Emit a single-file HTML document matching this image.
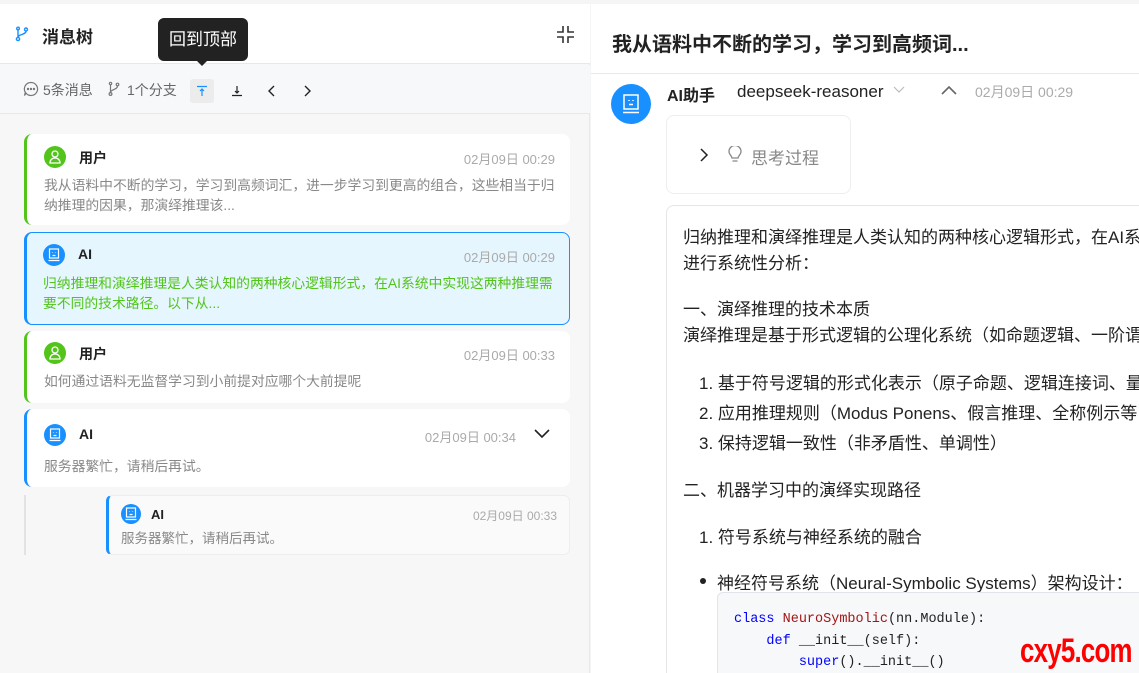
<!DOCTYPE html>
<html><head><meta charset="utf-8"><style>
*{box-sizing:border-box;margin:0;padding:0}
html,body{width:1139px;height:673px;overflow:hidden}
body{background:#f5f5f5;font-family:"Liberation Sans","Noto Sans CJK SC",sans-serif;color:#222;position:relative}
.abs{position:absolute}
.left{left:0;top:4px;width:590px;height:669px;background:#f7f7f7;border-right:1px solid #e8e8e8}
.lh{left:0;top:0;width:590px;height:60px;background:#fff;border-bottom:1px solid #e8e8e8}
.tb{left:0;top:61px;width:590px;height:49px;background:#f7f8fa;border-bottom:1px solid #e8e8e8;font-size:14px;color:#666}
.card{position:absolute;left:24px;width:546px;background:#fff;border-radius:8px;border-left:3px solid #52c41a}
.av{position:absolute;width:22px;height:22px;border-radius:50%}
.av svg{position:absolute;left:5px;top:4px}
.g{background:#52c41a}.b{background:#1890ff}
.nm{position:absolute;font-size:14px;font-weight:bold;color:#222}
.dt{position:absolute;font-size:13px;color:#aaa}
.ct{position:absolute;font-size:13.8px;color:#888;line-height:20px}
.right{left:591px;top:4px;width:548px;height:669px;background:#fff}
.txt{position:absolute;left:683px;font-size:17px;color:#222;white-space:nowrap}
</style></head><body>
<div class="abs left">
 <div class="abs lh">
  <svg class="abs" style="left:15px;top:22px" width="14" height="16" viewBox="0 0 14 16" fill="none" stroke="#1890ff" stroke-width="1.4"><circle cx="3" cy="13" r="1.6"/><circle cx="3" cy="2.5" r="1.3"/><circle cx="11" cy="3.5" r="1.5"/><path d="M3 4v7.4M11 5c0 4-8 3-8 6.5"/></svg>
  <div class="abs" style="left:42px;top:19px;font-size:17px;font-weight:bold">消息树</div>
  <svg class="abs" style="left:557px;top:22px" width="17" height="17" viewBox="0 0 17 17" fill="none" stroke="#333" stroke-width="1.6"><path d="M6 0v6H0M11 0v6h6M6 17v-6H0M11 17v-6h6"/></svg>
 </div>
 <div class="abs tb">
  <svg class="abs" style="left:23px;top:16px" width="16" height="16" viewBox="0 0 16 16" fill="none" stroke="#777" stroke-width="1.2"><path d="M8 1.5a6.5 6.5 0 1 1-5 10.6L1.5 14.5l.8-3.2A6.5 6.5 0 0 1 8 1.5z"/><circle cx="5" cy="8" r=".6" fill="#777"/><circle cx="8" cy="8" r=".6" fill="#777"/><circle cx="11" cy="8" r=".6" fill="#777"/></svg>
  <div class="abs" style="left:43px;top:15px">5条消息</div>
  <svg class="abs" style="left:108px;top:16px" width="12" height="16" viewBox="0 0 12 16" fill="none" stroke="#777" stroke-width="1.2"><circle cx="2.5" cy="13" r="1.4"/><circle cx="2.5" cy="2.5" r="1.2"/><circle cx="9.5" cy="3.5" r="1.3"/><path d="M2.5 4v7.5M9.5 5c0 4-7 3-7 6.5"/></svg>
  <div class="abs" style="left:127px;top:15px">1个分支</div>
  <div class="abs" style="left:190px;top:14px;width:24px;height:24px;background:#ececec;border-radius:3px"></div>
  <svg class="abs" style="left:196px;top:20px" width="12" height="12" viewBox="0 0 12 12" fill="none" stroke="#1890ff" stroke-width="1.2"><path d="M1 1.5h10M6 4v7M4 6l2-2 2 2"/></svg>
  <svg class="abs" style="left:231px;top:20px" width="12" height="12" viewBox="0 0 12 12" fill="none" stroke="#222" stroke-width="1.2"><path d="M1 10.5h10M6 1v7M4 6l2 2 2-2"/></svg>
  <svg class="abs" style="left:267px;top:20px" width="10" height="12" viewBox="0 0 10 12" fill="none" stroke="#222" stroke-width="1.4"><path d="M7 1L2 6l5 5"/></svg>
  <svg class="abs" style="left:302px;top:20px" width="10" height="12" viewBox="0 0 10 12" fill="none" stroke="#222" stroke-width="1.4"><path d="M3 1l5 5-5 5"/></svg>
 </div>
 <div class="card" style="top:130px;height:91px">
  <div class="av g" style="left:17px;top:12px"><svg width="12" height="14" viewBox="0 0 12 14" fill="none" stroke="#fff" stroke-width="1.3"><circle cx="6" cy="4" r="3"/><path d="M1 13c0-3 2-5 5-5s5 2 5 5z"/></svg></div>
  <div class="nm" style="left:52px;top:14px">用户</div>
  <div class="dt" style="right:15px;top:15px">02月09日 00:29</div>
  <div class="ct" style="left:17px;top:42px;width:514px">我从语料中不断的学习，学习到高频词汇，进一步学习到更高的组合，这些相当于归纳推理的因果，那演绎推理该...</div>
 </div>
 <div class="card" style="top:228px;height:93px;background:#e6f6fe;border:1px solid #1890ff;border-left:3px solid #1890ff">
  <div class="av b" style="left:16px;top:11px"><svg width="12" height="14" viewBox="0 0 12 14" fill="none" stroke="#fff" stroke-width="1.2"><rect x="1.5" y="1" width="9" height="9"/><path d="M.5 12.5h11M4.5 4.5v.5M7.5 4.5v.5M4.5 7.5h3"/></svg></div>
  <div class="nm" style="left:51px;top:13px">AI</div>
  <div class="dt" style="right:14px;top:14px">02月09日 00:29</div>
  <div class="ct" style="left:16px;top:41px;width:522px;color:#52c41a">归纳推理和演绎推理是人类认知的两种核心逻辑形式，在AI系统中实现这两种推理需要不同的技术路径。以下从...</div>
 </div>
 <div class="card" style="top:327px;height:72px">
  <div class="av g" style="left:17px;top:11px"><svg width="12" height="14" viewBox="0 0 12 14" fill="none" stroke="#fff" stroke-width="1.3"><circle cx="6" cy="4" r="3"/><path d="M1 13c0-3 2-5 5-5s5 2 5 5z"/></svg></div>
  <div class="nm" style="left:52px;top:13px">用户</div>
  <div class="dt" style="right:15px;top:14px">02月09日 00:33</div>
  <div class="ct" style="left:17px;top:41px">如何通过语料无监督学习到小前提对应哪个大前提呢</div>
 </div>
 <div class="card" style="top:405px;height:78px;border-left-color:#1890ff">
  <div class="av b" style="left:17px;top:15px"><svg width="12" height="14" viewBox="0 0 12 14" fill="none" stroke="#fff" stroke-width="1.2"><rect x="1.5" y="1" width="9" height="9"/><path d="M.5 12.5h11M4.5 4.5v.5M7.5 4.5v.5M4.5 7.5h3"/></svg></div>
  <div class="nm" style="left:52px;top:17px">AI</div>
  <div class="dt" style="right:54px;top:18px">02月09日 00:34</div>
  <svg class="abs" style="right:20px;top:20px" width="16" height="10" viewBox="0 0 16 10" fill="none" stroke="#222" stroke-width="1.6"><path d="M1 1l7 7 7-7"/></svg>
  <div class="ct" style="left:17px;top:48px">服务器繁忙，请稍后再试。</div>
 </div>
 <div class="abs" style="left:24px;top:491px;width:2px;height:60px;background:#e2e2e2"></div>
 <div class="abs" style="left:106px;top:491px;width:464px;height:60px;background:#fafafa;border:1px solid #eee;border-left:3px solid #1890ff;border-radius:6px">
  <div class="av b" style="left:12px;top:8px;width:20px;height:20px"><svg style="left:4px;top:3px" width="12" height="14" viewBox="0 0 12 14" fill="none" stroke="#fff" stroke-width="1.2"><rect x="1.5" y="1" width="9" height="9"/><path d="M.5 12.5h11M4.5 4.5v.5M7.5 4.5v.5M4.5 7.5h3"/></svg></div>
  <div class="nm" style="left:42px;top:11px;font-size:13px">AI</div>
  <div class="dt" style="right:12px;top:11px;font-size:12px">02月09日 00:33</div>
  <div class="ct" style="left:12px;top:33px;font-size:13.5px">服务器繁忙，请稍后再试。</div>
 </div>
 <div class="abs" style="left:158px;top:14px;width:90px;height:43px;background:#222;border-radius:6px;color:#fff;font-size:17px;line-height:43px;text-align:center">回到顶部</div>
 <div class="abs" style="left:196px;top:56px;width:0;height:0;border:6px solid transparent;border-top-color:#222"></div>
</div>
<div class="abs right">
 <div class="abs" style="left:0;top:0;width:548px;height:70px;border-bottom:1px solid #e8e8e8"></div>
 <div class="abs" style="left:21px;top:24px;font-size:20px;font-weight:bold">我从语料中不断的学习，学习到高频词...</div>
</div>
<div class="abs" style="left:611px;top:84px;width:40px;height:40px;border-radius:50%;background:#1890ff"></div>
<svg class="abs" style="left:622px;top:94px" width="18" height="20" viewBox="0 0 18 20" fill="none" stroke="#fff" stroke-width="1.5"><rect x="2" y="1" width="14" height="14"/><path d="M1 18.5h16M7 6v1M11 6v1M7 10.5h4"/></svg>
<div class="abs" style="left:667px;top:82px;font-size:16px;font-weight:bold">AI助手</div>
<div class="abs" style="left:737px;top:82px;font-size:17px;color:#222">deepseek-reasoner</div>
<svg class="abs" style="left:893px;top:86px" width="12" height="8" viewBox="0 0 12 8" fill="none" stroke="#bbb" stroke-width="1.2"><path d="M1 1l5 5 5-5"/></svg>
<svg class="abs" style="left:941px;top:85px" width="16" height="10" viewBox="0 0 16 10" fill="none" stroke="#666" stroke-width="1.6"><path d="M1 9l7-7 7 7"/></svg>
<div class="abs" style="left:975px;top:82px;font-size:14px;color:#aaa">02月09日 00:29</div>
<div class="abs" style="left:666px;top:115px;width:185px;height:79px;border:1px solid #eee;border-radius:8px"></div>
<svg class="abs" style="left:699px;top:148px" width="10" height="14" viewBox="0 0 10 14" fill="none" stroke="#222" stroke-width="1.5"><path d="M2 1l6 6-6 6"/></svg>
<svg class="abs" style="left:727px;top:146px" width="16" height="18" viewBox="0 0 16 18" fill="none" stroke="#888" stroke-width="1.3"><path d="M5 12c0-2-3-3.5-3-6.5a6 6 0 0 1 12 0c0 3-3 4.5-3 6.5zM5.5 15h5"/></svg>
<div class="abs" style="left:751px;top:144px;font-size:17px;color:#888">思考过程</div>
<div class="abs" style="left:666px;top:205px;width:500px;height:480px;border:1px solid #e5e5e5;border-radius:8px"></div>
<div class="txt" style="top:223px">归纳推理和演绎推理是人类认知的两种核心逻辑形式，在AI系</div>
<div class="txt" style="top:249px">进行系统性分析：</div>
<div class="txt" style="top:295px">一、演绎推理的技术本质</div>
<div class="txt" style="top:321px">演绎推理是基于形式逻辑的公理化系统（如命题逻辑、一阶谓</div>
<div class="txt" style="top:369px;left:699px">1. 基于符号逻辑的形式化表示（原子命题、逻辑连接词、量</div>
<div class="txt" style="top:399px;left:699px">2. 应用推理规则（Modus Ponens、假言推理、全称例示等</div>
<div class="txt" style="top:429px;left:699px">3. 保持逻辑一致性（非矛盾性、单调性）</div>
<div class="txt" style="top:476px">二、机器学习中的演绎实现路径</div>
<div class="txt" style="top:523px;left:699px">1. 符号系统与神经系统的融合</div>
<div class="abs" style="left:700px;top:578px;width:6px;height:6px;border-radius:50%;background:#222"></div>
<div class="txt" style="top:569px;left:717px">神经符号系统（Neural-Symbolic Systems）架构设计：</div>
<div class="abs" style="left:717px;top:592px;width:440px;height:100px;background:#f6f8fa;border:1px solid #e1e4e8;border-radius:6px"></div>
<pre class="abs" style="left:734px;top:609px;font-family:'Liberation Mono',monospace;font-size:13.5px;line-height:21.5px;color:#222"><span style="color:#00f">class</span> <span style="color:#a31515">NeuroSymbolic</span>(nn.Module):
    <span style="color:#00f">def</span> __init__(self):
        <span style="color:#00f">super</span>().__init__()</pre>
<div class="abs" style="left:1020px;top:632px;font-size:34px;font-weight:bold;color:#f00;font-family:'Liberation Sans',sans-serif;letter-spacing:-1px;transform:scaleX(0.76);transform-origin:left;white-space:nowrap">cxy5.com</div>
</body></html>
